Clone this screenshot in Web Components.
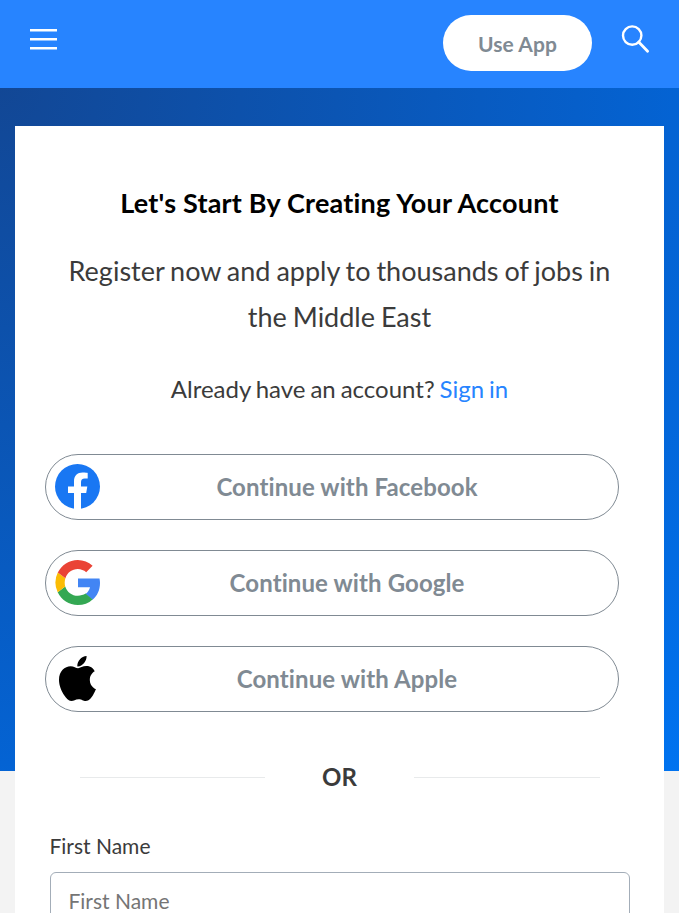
<!DOCTYPE html>
<html lang="en">
<head>
<meta charset="utf-8">
<title>Create Your Account</title>
<style>
html,body{margin:0;height:100%;overflow:hidden}
body{font-family:Lato,"Liberation Sans",sans-serif;font-variant-ligatures:none;color:#3b3b3b;background:#f3f3f3}
</style>
</head>
<body>
<register-page></register-page>
<script>
function define(name, markup){
  const t=document.createElement('template');
  t.innerHTML=markup;
  customElements.define(name,class extends HTMLElement{
    constructor(){super();this.attachShadow({mode:'open'}).appendChild(t.content.cloneNode(true));}
  });
}
define('pill-button',`
<style>:host{display:block}
button{all:unset;box-sizing:border-box;display:flex;align-items:center;justify-content:center;width:149px;height:56px;padding-top:2px;border-radius:28px;background:#fff;color:#808a93;font:bold 21px/30px Lato,sans-serif;letter-spacing:.1px}</style>
<button><slot></slot></button>`);
define('app-header',`
<style>:host{display:flex;align-items:flex-start;height:88px;box-sizing:border-box;padding:15px 29px 0 30px;background:#2784ff}
svg{display:block}.menu{margin-top:14px}.space{flex:1}.search{margin:9px 0 0 28px}</style>
<svg class="menu" width="27" height="22" viewBox="0 0 27 22"><path d="M0 1.2h27M0 10.2h27M0 19.2h27" stroke="#fff" stroke-width="2.4"/></svg>
<span class="space"></span>
<pill-button>Use App</pill-button>
<svg class="search" width="30" height="30" viewBox="0 0 30 30" fill="none" stroke="#fff"><circle cx="12.2" cy="11.6" r="9.2" stroke-width="2.4"/><path d="M18.7 18.1L27.6 27.2" stroke-width="2.8" stroke-linecap="round"/></svg>`);
define('social-button',`
<style>:host{display:block}
button{all:unset;box-sizing:border-box;width:574px;height:66px;display:grid;grid-template-columns:45px 1fr;align-items:center;padding:0 9px;border:1px solid #808a93;border-radius:33px;color:#808a93;font:bold 24px/36px Lato,sans-serif;font-variant-ligatures:none;letter-spacing:.1px}
.label{text-align:center;padding-right:15px}
::slotted(svg){display:block;width:45px;height:45px;margin-bottom:1px}</style>
<button><slot name="icon"></slot><span class="label"><slot></slot></span></button>`);
define('or-divider',`
<style>:host{display:grid;grid-template-columns:185px 1fr 186px;align-items:center;padding:0 29px 0 30px;height:36px;font-weight:bold;font-size:24px;line-height:36px;text-align:center}
i{height:1px;background:#e8eaeb}</style>
<i></i><span>OR</span><i></i>`);
define('text-field',`
<style>:host{display:block}
label{display:block;font-size:21px;line-height:30px;margin-left:-.5px}
input{box-sizing:border-box;display:block;width:580px;height:56px;margin:11px 0 0;padding:0 17.5px;border:1px solid #a3adb8;border-radius:6px;background:#fff;font:21px Lato,sans-serif;color:#3b3b3b;outline:0}
input::placeholder{color:#757575;opacity:1}</style>
<label for="name">First Name</label><input id="name" placeholder="First Name">`);
define('register-card',`
<style>:host{display:block;box-sizing:border-box;margin:0 15px;height:800px;padding:57px 35px 0;background:#fff}
h1{margin:0;font-size:27px;line-height:40px;font-weight:bold;color:#000;text-align:center;letter-spacing:.2px}
.lead{margin:25px 0 0;font-size:27px;line-height:46px;text-align:center;word-spacing:-1px}
.signin{margin:31px 0 0;font-size:24px;line-height:36px;text-align:center;word-spacing:-1.2px}
a{color:#2784ff;text-decoration:none}
.social{display:grid;gap:30px;margin:47px 0 0 -5px}
or-divider{margin-top:47px}text-field{margin-top:36px}</style>
<h1>Let's Start By Creating Your Account</h1>
<p class="lead">Register now and apply to thousands of jobs in<br>the Middle East</p>
<p class="signin">Already have an account? <a href="#">Sign in</a></p>
<div class="social">
<social-button><svg slot="icon" viewBox="0 0 45 45"><circle cx="22.5" cy="22.5" r="22.5" fill="#1977f3"/><path fill="#fff" d="M19 45V29h-6v-6.6h6v-5.1c0-5.7 3.4-8.8 8.6-8.8 2.5 0 5.1.4 5.1.4v5.7h-2.9c-2.8 0-3.8 1.7-3.8 3.6v4.2h6.3L31.2 29H26v16a23 23 0 0 1-7 0z"/></svg>Continue with Facebook</social-button>
<social-button><svg slot="icon" viewBox="0 0 45 45"><path fill="#4285f4" d="M44.5 18.4c.3 1.5.5 3 .5 4.6 0 7-2.8 13-7.5 16.8l-7.1-5.7c2.4-1.6 4-4 4.6-6.8H23v-8.9z"/><path fill="#34a853" d="M2.7 32.2l7.5-5.8c1.8 5.7 6.7 9.3 12.6 9.3 3 0 5.6-.7 7.7-2.1l7.1 5.9C33.7 43.2 28.6 45 22.8 45 14 45 6.4 39.8 2.7 32.2z"/><path fill="#fbbc04" d="M2.7 32.2A22.3 22.3 0 0 1 2.8 12.6l7.6 5.6a14.2 14.2 0 0 0-.2 8.2z"/><path fill="#ea4335" d="M2.8 12.6C6.6 5.1 14 0 22.8 0c5.7 0 10.6 2.1 14.8 5.8l-6.4 6.4c-2.2-1.8-5.3-3.1-8.4-3.1-5.7 0-10.6 3.7-12.4 9.1z"/></svg>Continue with Google</social-button>
<social-button><svg slot="icon" viewBox="0 0 45 45"><path d="M39.7 15.3c-.3.2-4.9 2.8-4.9 8.6 0 6.7 5.9 9.1 6.1 9.2 0 .2-1 3.3-3.1 6.4-1.9 2.7-3.9 5.5-6.9 5.5s-3.8-1.8-7.3-1.8c-3.4 0-4.6 1.8-7.4 1.8s-4.7-2.5-7-5.7C6.6 35.5 4 29.6 4 24c0-9 5.8-13.7 11.6-13.7 3.1 0 5.6 2 7.5 2 1.8 0 4.7-2.2 8.2-2.2 1.3 0 6 .1 8.4 5.2zM29.1 7.1c1.4-1.7 2.5-4.1 2.5-6.5 0-.3 0-.6-.1-.6-2.3.1-5.1 1.5-6.7 3.4-1.3 1.5-2.5 3.8-2.5 6.2 0 .4.1.7.1.9 2.1.3 5.1-1.5 6.7-3.4z"/></svg>Continue with Apple</social-button>
</div>
<or-divider></or-divider>
<text-field></text-field>`);
define('register-page',`
<style>:host{display:block;height:913px;overflow:hidden;background:#f3f3f3}
main{box-sizing:border-box;height:683px;padding-top:38px;background:radial-gradient(circle farthest-corner at 0 0,#124795 0%,#0463d3 70%,#0073f0 100%)}</style>
<app-header></app-header><main><register-card></register-card></main>`);
</script>
</body>
</html>
